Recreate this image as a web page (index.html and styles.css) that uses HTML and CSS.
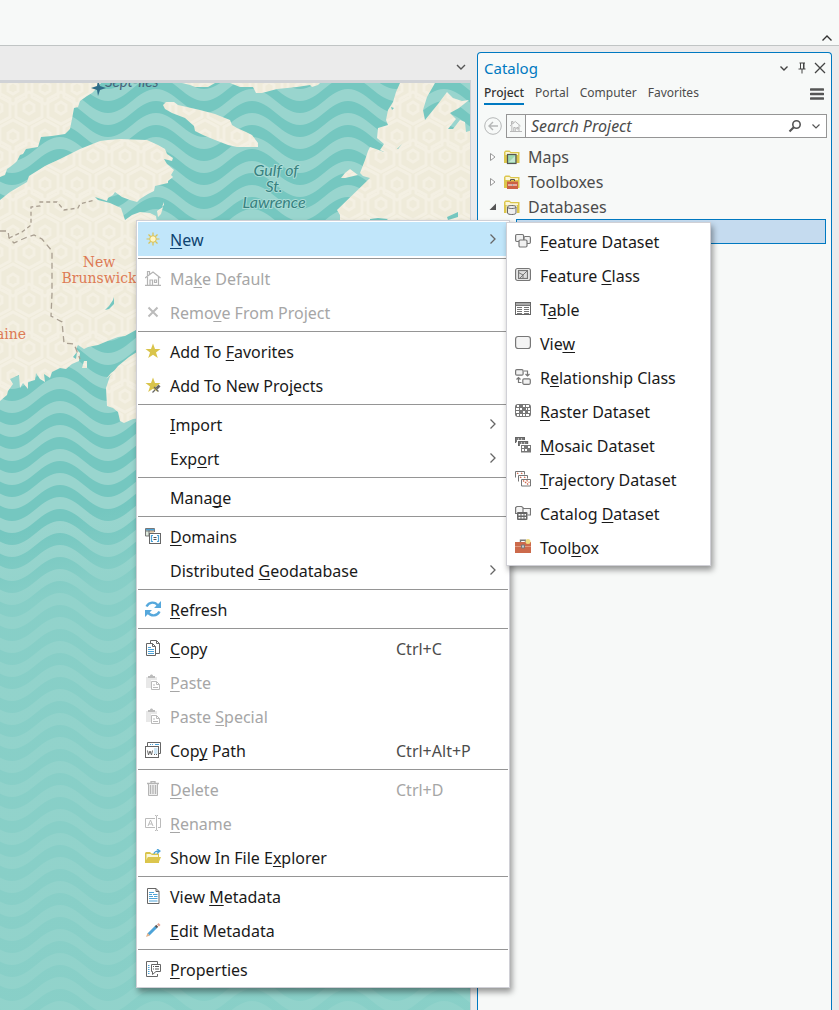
FILE: index.html
```html
<!DOCTYPE html>
<html lang="en">
<head>
<meta charset="utf-8">
<title>Catalog</title>
<link rel="stylesheet" href="styles.css">
</head>
<body>
<div class="app">
  <header class="ribbon">
    <button class="icon-btn" aria-label="Collapse ribbon"><svg class="ico12" viewBox="0 0 12 12"><path d="M1.500 8.500 6 4l4.500 4.500" fill="none" stroke="#333" stroke-width="1.400"/></svg></button>
  </header>
  <main class="workspace">
    <section class="map-pane">
      <div class="map-tabs"><button class="icon-btn" aria-label="Open views"><svg class="ico12" viewBox="0 0 12 12"><path d="M2 4l4 4 4-4" fill="none" stroke="#555" stroke-width="1.400"/></svg></button></div>
      <svg class="map" viewBox="0 83 470 927" preserveAspectRatio="xMinYMin slice">
        <defs>
          <pattern id="waves" x="12" y="5" width="96" height="24" patternUnits="userSpaceOnUse">
            <rect width="96" height="24" fill="#75c7c0"/>
            <g fill="#99d5ce">
              <path id="w" d="M0 -12C18 -12 30 -36 48 -36S78 -12 96 -12V0C78 0 66 -24 48 -24S18 0 0 0Z"/>
              <use href="#w" y="24"/><use href="#w" y="48"/>
            </g>
          </pattern>
          <pattern id="hex" x="13" y="88" width="32" height="48" patternUnits="userSpaceOnUse">
            <rect width="32" height="48" fill="#efebda"/>
            <g fill="none" stroke="#f4f0e3" stroke-width="3">
              <path id="h" d="M0 -6 5 -3V3L0 6-5 3V-3ZM0 -16 13 -9V9L0 16-13 9V-9Z"/>
              <use href="#h" x="32"/><use href="#h" y="48"/><use href="#h" x="32" y="48"/><use href="#h" x="16" y="20"/>
            </g>
          </pattern>
          <linearGradient id="shelf" x1="0" y1="0" x2="0.120" y2="1"><stop offset="0.480" stop-color="#8fd2ca" stop-opacity="0"/><stop offset="0.560" stop-color="#8fd2ca" stop-opacity="0.700"/><stop offset="1" stop-color="#8fd2ca" stop-opacity="0.750"/></linearGradient>
        </defs>
        <rect y="83" width="472" height="927" fill="url(#waves)"/>
        <rect y="83" width="472" height="927" fill="url(#shelf)"/>
        <g fill="url(#hex)">
          <path d="M0 83H101L97 88 92 93 87 96 80 101 78 107 74 108 72 119 70 129 65 134 52 136 41 137 38 147 26 149 23 154 20 155 17 161 15 163 10 167 7 169 5 175 0 177Z"/>
          <path d="M0 200 10 192 27 182 29 176 45 166 60 159 80 149 100 141 108 140 120 139 147 140 158 145 165 149 167 154 173 158 172 161 164 159 167 164 174 170 171 175 173 177 168 181 168 183 155 186 154 191 148 194 140 199 137 202 130 200 122 197 115 192 113 195 108 198 107 201 95 197 98 200 110 203 121 208 123 214 125 220 132 215 140 212 150 213 156 216 160 240 160 320 136 330 125 336 118 337 110 340 98 345 88 347 84 349 78 345 76 349 80 353 79 361 72 364 66 369 60 368 52 372 50 378 44 374 45 382 40 379 36 373 35 380 28 382 28 389 23 383 20 388 19 375 10 379 13 384 8 391 7 395 0 401Z"/>
          <path d="M160 350H140L129 357 118 366 110 376 106 388 107 406 113 408 118 412 120 421 124 423 133 419 160 416Z"/>
          <path d="M163 105 166 102 174 102 178 105 200 110 215 114 230 120 232 125 237 128 246 132 252 135 258 143 258 147 237 147 228 145 215 140 203 135 195 131 194 126 185 118 172 113 165 109Z"/>
          <path d="M182 83 190 85 195 87 208 87 215 83H230L240 87 253 87 256 93 262 93 277 89 297 87 310 85 312 87 318 85 320 83Z"/>
          <path d="M400 83 396 92 393 102 388 110 386 120 388 125 378 128 377 138 384 144 380 150 384 152 376 149 370 147 368 151 365 160 360 173 363 176 370 178 337 210 340 215 340 222H472V130L466 132 465 122 460 120 453 129 448 129 456 119 450 113 459 108 469 100 462 101 453 98 447 92 438 104 425 120 423 110 427 97 435 83Z"/>
          <path d="M341 178 345 173 350 169 358 175 345 178ZM157 211 163 207 161 214 158 217ZM162 207 164 202 164 205ZM84 361 87 361 87 368 82 368ZM106 379 124 364 111 373Z"/>
        </g>
        <g fill="#75c7c0"><path d="M105 310 109 306 113 300 114 297 114 304 109 309ZM73 357 77 352 76 359ZM397 149 402 144 398 149ZM370 219 378 218 388 219 384 222 370 222ZM447 217 458 212 458 217 448 220ZM391 107 394 108 392 110Z"/></g>
        <g fill="none" stroke="#a99f91" stroke-width="1.300" stroke-dasharray="6 4">
          <path d="M0 231H8L9 238 14 243 25 238 34 235 42 239 52 251V294L51 316 62 322 64 343 74 344 80 359"/>
          <path d="M9 238 22 232 31 225V207L40 206V202H57L64 210 78 208 80 204 95 200" stroke-dasharray="4 3"/>
        </g>
        <path d="M98 80 100 86 106 88 100 90 98 96 97 90 91 88 97 86Z" fill="#2e6d88"/>
        <g class="place"><text x="105" y="87">Sept-Îles</text></g>
        <g class="sea"><text x="276" y="176">Gulf of</text><text x="274" y="192">St.</text><text x="274" y="208">Lawrence</text></g>
        <g class="region"><text x="99" y="267">New</text><text x="99" y="283">Brunswick</text><text x="11" y="339">aine</text></g>
      </svg>
    </section>

    <aside class="catalog">
      <div class="catalog-head">
        <h1>Catalog</h1>
        <button class="icon-btn" aria-label="Options"><svg class="ico12" viewBox="0 0 12 12"><path d="M2.500 4.500 6 8l3.500-3.500" fill="none" stroke="#444" stroke-width="1.400"/></svg></button>
        <button class="icon-btn" aria-label="Pin"><svg class="ico12" viewBox="0 0 12 12"><path d="M3.500 1H9M4.500 1v6M7.500 1v6M2.500 7h7M6 7v4.500" fill="none" stroke="#444"/><path d="M7 1h1.500v6H7z" fill="#444"/></svg></button>
        <button class="icon-btn" aria-label="Close"><svg class="ico12" viewBox="0 0 12 12"><path d="M1 1l10 10M11 1 1 11" fill="none" stroke="#444" stroke-width="1.300"/></svg></button>
      </div>
      <nav class="tabs">
        <button class="tab active">Project</button><button class="tab">Portal</button><button class="tab">Computer</button><button class="tab">Favorites</button>
        <button class="icon-btn burger" aria-label="Menu"><svg width="14" height="14" viewBox="0 0 14 14"><path d="M1 2.500h12M1 7h12M1 11.500h12" stroke="#555" stroke-width="2.600" stroke-linecap="round"/></svg></button>
      </nav>
      <div class="search-row">
        <button class="icon-btn" aria-label="Back"><svg width="18" height="18" viewBox="0 0 18 18" fill="none" stroke="#b5b7b7"><circle cx="9" cy="9" r="8.300"/><path d="M14 9H5M9 5 5 9l4 4" stroke-width="1.400"/></svg></button>
        <div class="search">
          <button class="home" aria-label="Home"><svg width="12" height="12" viewBox="0 0 16 16" fill="none" stroke="#b5b5b5" stroke-width="1.300"><path d="M0 8 7 2l7 6M2.500 7V15M12 7V15M0 15.300h16M4 5V2h-2v4M5 15v-5h2v5M9 10h2v2H9z"/></svg></button>
          <input type="text" aria-label="Search Project" placeholder="Search Project">
          <button class="icon-btn" aria-label="Search"><svg width="14" height="14" viewBox="0 0 14 14" fill="none" stroke="#555"><circle cx="8.500" cy="5.500" r="3.700" stroke-width="1.600"/><path d="M6 8 1.500 12.500" stroke-width="2.200"/></svg></button>
          <button class="icon-btn" aria-label="Search options"><svg class="ico12" viewBox="0 0 12 12"><path d="M2.500 4.500 6 8l3.500-3.500" fill="none" stroke="#555" stroke-width="1.200"/></svg></button>
        </div>
      </div>
      <ul class="tree">
        <li><svg class="twist" viewBox="0 0 8 10"><path d="M1.500 1.500v7L6 5Z" fill="#fff" stroke="#999"/></svg><svg class="ico" viewBox="0 0 16 16"><path d="M0 14V3L1.500 1.500h4L7 3h8.500v11Z" fill="#dcc64d"/><path d="M1.500 3h4l1 1.300h7.500V6H1.500Z" fill="#fbf7da"/><rect x="3.500" y="5.500" width="8.500" height="9" fill="#9ed8ad" stroke="#555" stroke-width="1.200"/><path d="M5 13 11 7v6z" fill="#c5e8d5"/></svg>Maps</li>
        <li><svg class="twist" viewBox="0 0 8 10"><path d="M1.500 1.500v7L6 5Z" fill="#fff" stroke="#999"/></svg><svg class="ico" viewBox="0 0 16 16"><path d="M0 14V3L1.500 1.500h4L7 3h8.500v11Z" fill="#dcc64d"/><path d="M1.500 3h4l1 1.300h7.500V6H1.500Z" fill="#fbf7da"/><path d="M3 7.500h11V15H3z" fill="#cc6144"/><path d="M6.500 7V5.500h4V7M8.500 10v2" fill="none" stroke="#555"/><path d="M4 11h9" stroke="#fff"/></svg>Toolboxes</li>
        <li><svg class="twist" viewBox="0 0 8 10"><path d="M7 1.500V8H.5Z" fill="#555"/></svg><svg class="ico" viewBox="0 0 16 16"><path d="M0 14V3L1.500 1.500h4L7 3h8.500v11Z" fill="#dcc64d"/><path d="M1.500 3h4l1 1.300h7.500V6H1.500Z" fill="#fbf7da"/><path d="M2.500 6.500h10.500V16H2.500z" fill="#f7f9f8"/><path d="M3.500 8v6c0 2 8.500 2 8.500 0V8c0-2-8.500-2-8.500 0c0 2 8.500 2 8.500 0" fill="#eee" stroke="#666"/></svg>Databases</li>
        <li class="selected"></li>
      </ul>
    </aside>
  </main>

  <ul class="menu context">
    <li><button class="item on"><svg class="ico" viewBox="0 0 16 16"><path d="M8 1.500v13M1.500 8h13M3.500 3.500l9 9M12.500 3.500l-9 9" stroke="#d9c254" stroke-width="1.200"/><circle cx="8" cy="8" r="3.300" fill="#fff6c4" stroke="#d9c254"/></svg><span><u>N</u>ew</span><svg class="chev" viewBox="0 0 8 12"><path d="M1.500 1.500 6 6l-4.500 4.500"/></svg></button></li>
    <li class="sep"></li>
    <li><button class="item" disabled><svg class="ico" viewBox="0 0 16 16" fill="none" stroke="#b4b4b4" stroke-width="1.200"><path d="M0 8 8 2l7.500 6M2.500 7v8M13.500 7v8M0 15.400h16M4.500 4.500v-3h-2V6M5 15v-5h2.500v5M9.500 10h2v2.500h-2z"/></svg><span>Ma<u>k</u>e Default</span></button></li>
    <li><button class="item" disabled><svg class="ico" viewBox="0 0 16 16"><path d="M3.500 3.500l9 9M12.500 3.500l-9 9" stroke="#bbb" stroke-width="2"/></svg><span>Remo<u>v</u>e From Project</span></button></li>
    <li class="sep"></li>
    <li><button class="item"><svg class="ico" viewBox="0 0 16 16"><path d="M8 .5 10 6h5.500L11 9.500l1.800 5.500L8 11.700 3.200 15 5 9.500.5 6H6Z" fill="#d9c44b"/></svg><span>Add To <u>F</u>avorites</span></button></li>
    <li><button class="item"><svg class="ico" viewBox="0 0 16 16"><path d="M8 .5 10 6h5.500L11 9.500l1.800 5.500L8 11.700 3.200 15 5 9.500.5 6H6Z" fill="#d9c44b"/><path d="M7.500 15.500 10 13M9 10l4.500 4.500" stroke="#666" stroke-width="1.200"/><path d="M10.500 10.500 13.500 7.500l2 2-3 3z" fill="#666"/></svg><span>Add To New Pro<u>j</u>ects</span></button></li>
    <li class="sep"></li>
    <li><button class="item"><i class="ico"></i><span><u>I</u>mport</span><svg class="chev" viewBox="0 0 8 12"><path d="M1.500 1.500 6 6l-4.500 4.500"/></svg></button></li>
    <li><button class="item"><i class="ico"></i><span>Exp<u>o</u>rt</span><svg class="chev" viewBox="0 0 8 12"><path d="M1.500 1.500 6 6l-4.500 4.500"/></svg></button></li>
    <li class="sep"></li>
    <li><button class="item"><i class="ico"></i><span>Mana<u>g</u>e</span></button></li>
    <li class="sep"></li>
    <li><button class="item"><svg class="ico" viewBox="0 0 16 16"><path d="M.5 8V.5h9V4M4 1v7H.5" fill="#dfeadd" stroke="#777"/><path d="M1 1h8.500v1.500H1z" fill="#4da3d8"/><path d="M0 3h10" stroke="#777"/><path d="M5 3.500h4v1H5z" fill="#e8b888"/><rect x="4.500" y="5.500" width="11" height="10" fill="#fff" stroke="#666"/><path d="M8 7.500H6.500v6H8M12 7.500h1.500v6H12" fill="none" stroke="#4da3d8" stroke-width="1.200"/><path d="M8.500 9.500h3M8.500 11.500h3" stroke="#555"/></svg><span><u>D</u>omains</span></button></li>
    <li><button class="item"><i class="ico"></i><span>Distributed <u>G</u>eodatabase</span><svg class="chev" viewBox="0 0 8 12"><path d="M1.500 1.500 6 6l-4.500 4.500"/></svg></button></li>
    <li class="sep"></li>
    <li><button class="item"><svg class="ico" viewBox="0 0 16 16"><path d="M1.500 5.500C4 .5 10 .5 13 4.500M14.500 10.500C12 15.500 6 15.500 3 11.500" fill="none" stroke="#56a8dc" stroke-width="2.400"/><path d="M16 0v7H9zM0 16V9h7z" fill="#56a8dc"/></svg><span><u>R</u>efresh</span></button></li>
    <li class="sep"></li>
    <li><button class="item"><svg class="ico" viewBox="0 0 16 16"><path d="M5.500 3.500v-3h6l3 3v10H10" fill="#fff" stroke="#666"/><path d="M11.500.5v3h3" fill="none" stroke="#666"/><path d="M1.500 3.500h6l3 3v9h-9z" fill="#fff" stroke="#666"/><path d="M7.500 3.500v3h3" fill="none" stroke="#666"/><path d="M3 7.500h3M3 9.500h6M3 11.500h6M3 13.500h6" stroke="#4da3d8"/></svg><span><u>C</u>opy</span><kbd>Ctrl+C</kbd></button></li>
    <li><button class="item" disabled><svg class="ico" viewBox="0 0 16 16"><path d="M1 3h11v3H6v8H1z" fill="#e8e8e8"/><path d="M3 2h2c0-2 3-2 3 0h2v2H3z" fill="#bbb"/><path d="M6.500 7.500h5l3 3v5h-8z" fill="#fff" stroke="#bbb"/><path d="M11.500 7.500v3h3M8 11h2M8 13.500h5" fill="none" stroke="#bbb"/></svg><span><u>P</u>aste</span></button></li>
    <li><button class="item" disabled><svg class="ico" viewBox="0 0 16 16"><path d="M1 3h11v3H6v8H1z" fill="#e8e8e8"/><path d="M3 2h2c0-2 3-2 3 0h2v2H3z" fill="#bbb"/><path d="M6.500 7.500h5l3 3v5h-8z" fill="#fff" stroke="#bbb"/><path d="M11.500 7.500v3h3M8 11h2M8 13.500h5" fill="none" stroke="#bbb"/></svg><span>Paste <u>S</u>pecial</span></button></li>
    <li><button class="item"><svg class="ico" viewBox="0 0 16 16"><path d="M2.500 4V.5h13v11H14" fill="#fff" stroke="#666"/><path d="M5 2.500h1M7 2.500h1M10 2.500h4" stroke="#4da3d8"/><rect x=".5" y="4.500" width="13" height="11" fill="#fff" stroke="#666"/><path d="M9 6h3.500v6H9z" fill="#cfe6f4"/><path d="M2.500 8.500 3.500 13l1.500-4 1.500 4 1-4.500M9 12.500h1M11 12.500h1" fill="none" stroke="#666"/></svg><span>Cop<u>y</u> Path</span><kbd>Ctrl+Alt+P</kbd></button></li>
    <li class="sep"></li>
    <li><button class="item" disabled><svg class="ico" viewBox="0 0 16 16" fill="none" stroke="#b5b5b5"><path d="M2 2.500h12M6 2V.5h4V2" stroke-width="1.300"/><path d="M3.500 3v11.500h9V3" fill="#eee"/><path d="M5.500 4v9M8 4v9M10.500 4v9" stroke-width="1.300"/></svg><span><u>D</u>elete</span><kbd>Ctrl+D</kbd></button></li>
    <li><button class="item" disabled><svg class="ico" viewBox="0 0 16 16" fill="none" stroke="#bbb"><path d="M10 3.500H.5v9H10M13 3.500h2.500v9H13M10 .5h1l.5.500.5-.500h1M11.500 1v14M10 15.500h1l.5-.500.5.500h1M3 11l2.500-6L8 11M4 9h3"/></svg><span><u>R</u>ename</span></button></li>
    <li><button class="item"><svg class="ico" viewBox="0 0 16 16"><path d="M0 14V4l1-1h4l1.500 1.500H14V14Z" fill="#d9c44b"/><path d="M1.500 7V5h4L7 6h6v2H3L1.500 11Z" fill="#fbf7da"/><path d="M3 8h13l-2.500 6H1Z" fill="#dcc64d"/><path d="M9 5c0-2 2-3 5-3M12 0l3 2-3 2.500" fill="none" stroke="#4da3d8" stroke-width="1.300"/></svg><span>Show In File E<u>x</u>plorer</span></button></li>
    <li class="sep"></li>
    <li><button class="item"><svg class="ico" viewBox="0 0 16 16"><path d="M2.500.5h8.500l3 3v12H2.500z" fill="#fff" stroke="#666"/><path d="M11 .5v3h3" fill="none" stroke="#666"/><path d="M4 4.500h5M4 6.500h3M8 6.500h4.500M4 8.500h4M9 8.500h3.500M4 10.500h8.500M4 13h8.500" stroke="#4da3d8"/></svg><span>View <u>M</u>etadata</span></button></li>
    <li><button class="item"><svg class="ico" viewBox="0 0 16 16"><path d="M3.500 12.500 11 5" stroke="#4da3d8" stroke-width="3"/><path d="M1 15l1.500-4L5 13.500z" fill="#e3b48c"/><path d="M10.500 3.500l2 2" stroke="#555" stroke-width="2"/><path d="M12 2.500 13.500 1 15.500 3 14 4.500z" fill="#e3a08c"/></svg><span><u>E</u>dit Metadata</span></button></li>
    <li class="sep"></li>
    <li><button class="item"><svg class="ico" viewBox="0 0 16 16"><path d="M12.500 3V.5h-11v15h11V13" fill="#fff" stroke="#666"/><path d="M3 4.500h1.500M3 6.500h1.500M3 8.500h1.500M3 10.500h1.500M3 12.500h1.500" stroke="#4da3d8"/><path d="M6.500 3.500h9v7H11L7.500 13.500V10.500h-1z" fill="#fff" stroke="#666"/><path d="M8 5.500h1M10 5.500h4M8 8h1M10 8h4" stroke="#555"/></svg><span><u>P</u>roperties</span></button></li>
  </ul>

  <ul class="menu submenu">
    <li><button class="item"><svg class="ico" viewBox="0 0 16 16" fill="#f1f1f1" stroke="#777" stroke-width="1.200"><rect x=".6" y="1.500" width="8" height="7" rx="1.200"/><rect x="9" y="3.500" width="6.400" height="7" rx="1.200"/><rect x="4" y="7" width="8" height="7" rx="1.200"/></svg><span><u>F</u>eature Dataset</span></button></li>
    <li><button class="item"><svg class="ico" viewBox="0 0 16 16" fill="#f1f1f1" stroke="#777" stroke-width="1.200"><rect x=".6" y="1.500" width="14.800" height="12" rx="2"/><rect x="3.500" y="3.500" width="9" height="8" fill="#ddd"/><path d="M3.500 5.500 8 8 12 4M8 8v3M5 11l3-3" fill="none" stroke-width="1"/></svg><span>Feature <u>C</u>lass</span></button></li>
    <li><button class="item"><svg class="ico" viewBox="0 0 16 16"><rect x=".5" y="1.500" width="15" height="12" fill="#fff" stroke="#666"/><path d="M1 2h14v2.500H1z" fill="#aaa"/><path d="M2 6.500h5M2 8.500h5M2 10.500h5M2 12.500h5M9 6.500h5M9 8.500h5M9 10.500h5M9 12.500h5M.5 4.500h15" stroke="#777"/></svg><span>T<u>a</u>ble</span></button></li>
    <li><button class="item"><svg class="ico" viewBox="0 0 16 16"><rect x=".6" y="1.500" width="14.800" height="12" rx="2.500" fill="#f4f4f4" stroke="#777" stroke-width="1.200"/></svg><span>Vie<u>w</u></span></button></li>
    <li><button class="item"><svg class="ico" viewBox="0 0 16 16" fill="#f1f1f1" stroke="#777" stroke-width="1.200"><rect x=".6" y=".6" width="7.500" height="5.500" rx="1.200"/><rect x="7.800" y="9.800" width="7.500" height="5.500" rx="1.200"/><path d="M9 2h3.500v5M10.500 5l2 2 2-2M6.500 13.500H3.500v-5M1.500 10.500l2-2 2 2" fill="none"/></svg><span>R<u>e</u>lationship Class</span></button></li>
    <li><button class="item"><svg class="ico" viewBox="0 0 16 16"><rect x="0" y="1" width="16" height="13" rx="3" fill="#777"/><g fill="#fff"><path d="M2 2h2v2H2zM5 2h2v2H5zM8 2h2v2H8zM11 2h3v2h-3zM1 5h3v2H1zM5 5h2v2H5zM8 5h2v2H8zM11 5h1v2h-1zM13 5h2v2h-2zM1 8h3v2H1zM5 8h2v2H5zM8 8h2v2H8zM11 8h1v2h-1zM13 8h2v2h-2zM2 11h2v2H2zM5 11h2v2H5zM8 11h2v2H8zM11 11h3v2h-3z"/></g><path d="M5 2h2v2H5zM8 5h2v2H8zM5 8h2v2H5zM11 8h1v2h-1z" fill="#777"/></svg><span><u>R</u>aster Dataset</span></button></li>
    <li><button class="item"><svg class="ico" viewBox="0 0 16 16"><path d="M.6 6V.6h8.800V3M3.600 9V4.600h9V7" fill="none" stroke="#666" stroke-width="1.200"/><path d="M1 1h8v2H2v2H1zM4 5h8v2H5v2H4zM6 8h10v7.500H6z" fill="#777"/><path d="M3 1.500h1v1H3zM6 1.500h1v1H6zM6 5.500h1v1H6zM9 5.500h1v1H9zM7 9h2v2H7zM13 9h2v2h-2zM10 12h2v2h-2zM7 12h2v2H7z" fill="#fff"/></svg><span><u>M</u>osaic Dataset</span></button></li>
    <li><button class="item"><svg class="ico" viewBox="0 0 16 16" fill="#fff" stroke="#777"><path d="M.5 6.500v-6h9v3M3.500 10.500v-6h9v3M6.500 8.500h9v6.500h-9z"/><path d="M2 2l2 1M6 2l2 1M5 6l2 1M9 6l2 1M8 9.500l6 4.500M11.500 9.500l3 2" stroke="#d0654a" stroke-width="1.200" stroke-dasharray="1.500 1"/></svg><span><u>T</u>rajectory Dataset</span></button></li>
    <li><button class="item"><svg class="ico" viewBox="0 0 16 16"><path d="M.6 8.500V2.600L2 1.500h4.500l1.500 1V8.500ZM8.500 3.500h7v6.500h-3" fill="#f4f4f4" stroke="#777" stroke-width="1.200"/><rect x="2" y="7" width="10.500" height="8" rx="1" fill="#666"/><path d="M3.500 9h2v1.500h-2zM6.500 9h2v1.500h-2zM9.500 9h1.500v1.500H9.500zM3.500 12h2v1.500h-2zM6.500 12h2v1.500h-2zM9.500 12h1.500v1.500H9.500z" fill="#fff"/></svg><span>Catalog <u>D</u>ataset</span></button></li>
    <li><button class="item"><svg class="ico" viewBox="0 0 16 16"><path d="M0 3h16v11H0z" fill="#cc6a4b"/><path d="M0 7.500h16" stroke="#e09a80"/><path d="M5.500 3V1.200h5V3" fill="none" stroke="#777" stroke-width="1.400"/><path d="M6.500 6h3v3h-3z" fill="#ccc" stroke="#777"/><circle cx="13" cy="2.500" r="2.500" fill="#f0dc80"/></svg><span>Tool<u>b</u>ox</span></button></li>
  </ul>
</div>
</body>
</html>
```

FILE: styles.css
```css
* { box-sizing: border-box; }
body { margin: 0; background: #ebebeb; color: #1a1a1a; font: 16px/24px "Noto Sans", "Open Sans", sans-serif; }
button { margin: 0; padding: 0; border: 0; background: none; color: inherit; font: inherit; }
ul { margin: 0; padding: 0; list-style: none; }
svg { display: block; flex: none; }
.app { position: relative; display: flex; flex-direction: column; height: 100vh; overflow: hidden; }
.icon-btn { display: flex; align-items: center; justify-content: center; }
.ico12 { width: 12px; height: 12px; }
.ico { width: 16px; height: 16px; flex: none; }

.ribbon { flex: none; display: flex; justify-content: flex-end; align-items: flex-end; height: 46px; padding: 0 6px 1px; background: #f7f9f8; border-bottom: 1px solid #c0c4c4; }
.workspace { flex: 1; min-height: 0; display: flex; }
.map-pane { flex: 1; min-width: 0; display: flex; flex-direction: column; }
.map-tabs { flex: none; display: flex; justify-content: flex-end; align-items: center; height: 34px; padding: 10px 4px 0 0; }
.map-tabs .icon-btn { padding-bottom: 2px; }
.map { flex: 1; min-height: 0; width: 100%; border-top: 3px solid #d0d2d6; border-right: 1px solid #d0d2d6; }
.sea text { font: italic 16px "Lato", sans-serif; fill: #37817f; stroke: #a9dcd6; stroke-width: 2px; paint-order: stroke; text-anchor: middle; }
.place text { font: italic 15px "Lato", sans-serif; fill: #46637a; }
.region text { font: 14px "DejaVu Serif", serif; fill: #dd7a54; text-anchor: middle; }

.catalog { flex: none; width: 355px; margin: 6px 7px 0 6px; padding: 0 4px 0 6px; background: #f7f9f8; border: 1px solid #0079c1; border-bottom: 0; border-radius: 4px 4px 0 0; color: #4c4c4c; }
.catalog-head { display: flex; align-items: center; gap: 6px; height: 30px; padding-right: 1px; }
.catalog-head h1 { flex: 1; margin: 0; font-size: 15px; font-weight: 400; color: #0079c1; }
.tabs { display: flex; align-items: center; gap: 11px; height: 22px; font-size: 12px; line-height: 20px; }
.tab { border-bottom: 2px solid transparent; }
.tab.active { border-color: #0079c1; color: #333; font-weight: 500; }
.burger { margin-left: auto; margin-right: 3px; }
.search-row { display: flex; align-items: center; gap: 4px; margin-top: 9px; }
.search { flex: 1; min-width: 0; display: flex; height: 24px; background: #fff; border: 1px solid #959595; gap: 8px; padding-right: 4px; }
.home { display: flex; align-items: center; justify-content: center; width: 19px; background: #f7f9f8; border-right: 1px solid #959595; }
.search input { flex: 1; min-width: 0; margin: 0 0 0 -3px; padding: 0; border: 0; outline: 0; background: none; color: #4c4c4c; font: italic 16px/22px "Noto Sans", sans-serif; }
.search input::placeholder { color: #4c4c4c; opacity: 1; }
.tree { margin: 6px 1px 0 0; }
.tree li { display: flex; align-items: center; height: 25px; padding-left: 5px; }
.twist { width: 8px; height: 10px; margin-right: 7px; }
.tree .ico { margin-right: 8px; }
.tree .selected { margin-left: 32px; background: #c5dbef; border: 1px solid #0079c1; }

.menu { position: absolute; padding: 1px; background: #fff; border: 1px solid #d0d0d6; box-shadow: 2px 4px 6px rgba(0, 0, 0, 0.4); }
.context { left: 136px; top: 220px; width: 374px; }
.submenu { left: 506px; top: 222px; width: 205px; }
.item { display: flex; align-items: center; width: 100%; height: 34px; padding: 1px 11px 0 7px; text-align: left; white-space: nowrap; }
.item .ico { margin: 0 9px 2px 0; }
.item span { flex: 1; }
.item u { text-decoration: underline; text-decoration-skip-ink: none; text-underline-offset: 2px; }
.item.on { background: #c1e6fa; color: #0e4370; }
.item:disabled { color: #a6a6a6; }
.item kbd { width: 101px; font: inherit; color: #4c4c4c; }
.item:disabled kbd { color: #a6a6a6; }
.sep { height: 1px; margin: 2px 0; background: #959595; }
.chev { width: 8px; height: 12px; margin-bottom: 2px; fill: none; stroke: #666; stroke-width: 1.300px; }
```
